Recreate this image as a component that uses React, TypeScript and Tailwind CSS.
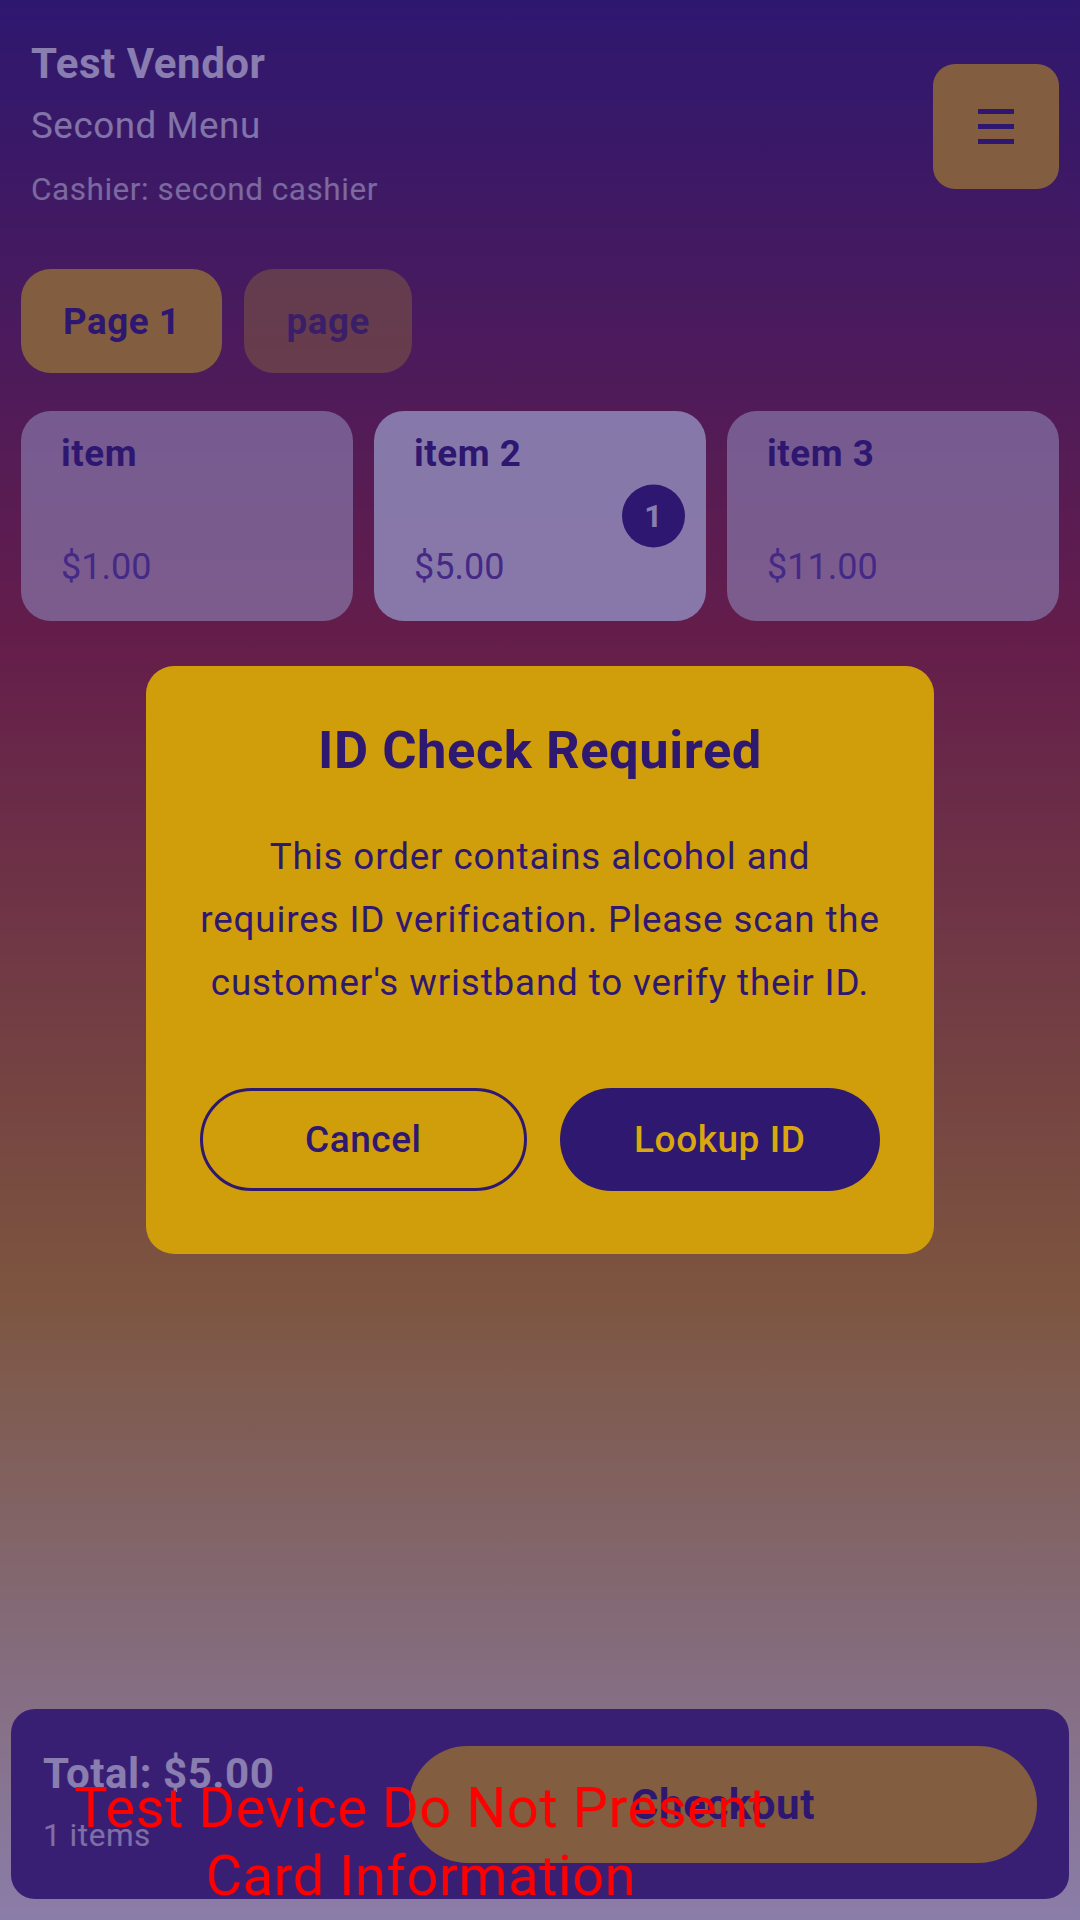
import React from 'react';

const items = [
  { name: 'item', price: '$1.00', qty: 0 },
  { name: 'item 2', price: '$5.00', qty: 1 },
  { name: 'item 3', price: '$11.00', qty: 0 },
];

export default function App() {
  return (
    <div className="relative w-[1080px] h-[1920px] overflow-hidden font-['Roboto',sans-serif] tracking-[0.034em] bg-[linear-gradient(180deg,#2e1870_0%,#a9261c_33%,#e1a300_67%,#fffff0_100%)]">
      <div className="flex flex-col h-full">
        {/* header */}
        <div className="flex justify-between px-[21px] pt-[39px]">
          <div className="pl-[10px] text-white">
            <div className="text-[42px] leading-[49px] font-bold">Test Vendor</div>
            <div className="mt-[16px] text-[36.75px] leading-[43px] text-white/90">Second Menu</div>
            <div className="mt-[24px] text-[31.5px] leading-[37px] text-white/80">Cashier: second cashier</div>
          </div>
          <button className="mt-[25px] w-[126px] h-[125px] rounded-[22px] bg-[#edb700] flex flex-col items-center justify-center gap-[10px]">
            <span className="block w-[36px] h-[5px] bg-[#2e1870]" />
            <span className="block w-[36px] h-[5px] bg-[#2e1870]" />
            <span className="block w-[36px] h-[5px] bg-[#2e1870]" />
          </button>
        </div>

        {/* page tabs */}
        <div className="mt-[61px] flex gap-[22px] px-[21px]">
          <button className="h-[104px] rounded-[30px] px-[42px] bg-[#edb700] text-[#2e1870] text-[36.75px] leading-[43px] font-bold">
            Page 1
          </button>
          <button className="h-[104px] rounded-[30px] px-[42px] bg-[#edb700]/50 text-[#2e1870]/80 text-[36.75px] leading-[43px] font-bold">
            page
          </button>
        </div>

        {/* items */}
        <div className="mt-[38px] grid grid-cols-3 gap-[21px] px-[21px]">
          {items.map((it) => (
            <div
              key={it.name}
              className={`relative h-[210px] rounded-[30px] flex flex-col justify-between pt-[21px] pb-[32px] pl-[40px] ${
                it.qty > 0 ? 'bg-white/95' : 'bg-white/65'
              }`}
            >
              <div className="text-[36.75px] leading-[43px] font-bold text-[#2e1870]">{it.name}</div>
              <div className="text-[36px] leading-[43px] tracking-normal text-[#6041a2]">{it.price}</div>
              {it.qty > 0 && (
                <div className="absolute right-[21px] top-1/2 -translate-y-1/2 w-[63px] h-[63px] rounded-full bg-[#2e1870] text-white text-[31.5px] font-bold flex items-center justify-center">
                  {it.qty}
                </div>
              )}
            </div>
          ))}
        </div>

        {/* bottom bar */}
        <div className="mt-auto mx-[11px] mb-[21px] h-[190px] rounded-[24px] bg-[#482a7a] px-[32px] flex items-center justify-between">
          <div className="text-white pb-[6px]">
            <div className="text-[42px] leading-[49px] font-bold">Total: $5.00</div>
            <div className="mt-[19px] text-[31.5px] leading-[37px] text-white/85">1 items</div>
          </div>
          <button className="w-[628px] h-[117px] rounded-full bg-[#edb700] text-[#2e1870] text-[42px] font-bold">
            Checkout
          </button>
        </div>
      </div>

      {/* dim overlay */}
      <div className="absolute inset-0 bg-[#2e1870]/[0.56]" />

      {/* dialog */}
      <div className="absolute inset-0 flex items-center justify-center">
        <div className="w-[788px] rounded-[28px] bg-[#d09e0b] pt-[53px] px-[54px] pb-[63px] text-center text-[#2e1870]">
          <div className="text-[52.5px] leading-[62px] font-bold">ID Check Required</div>
          <p className="mt-[44px] text-[36.75px] leading-[63px] tracking-[0.024em] whitespace-nowrap">
            This order contains alcohol and
            <br />
            requires ID verification. Please scan the
            <br />
            customer's wristband to verify their ID.
          </p>
          <div className="mt-[74px] flex gap-[33px]">
            <button className="flex-1 h-[103px] rounded-full border-[3px] border-[#2e1870] text-[37px] font-medium text-[#2e1870]">
              Cancel
            </button>
            <button className="flex-1 h-[103px] rounded-full bg-[#2e1870] text-[37px] font-medium text-[#d9a80e]">
              Lookup ID
            </button>
          </div>
        </div>
      </div>

      {/* test device watermark */}
      <div className="absolute left-0 top-[1774px] w-[842px] text-center text-[56px] leading-[68px] text-[#ff0000]">
        Test Device Do Not Present
        <br />
        Card Information
      </div>
    </div>
  );
}
